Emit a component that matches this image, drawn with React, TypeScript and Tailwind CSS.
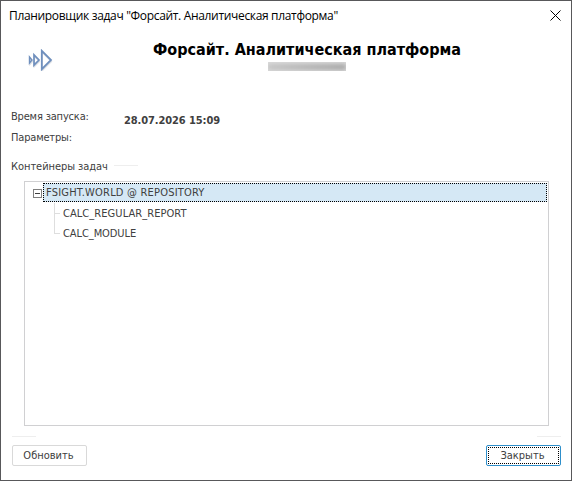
import React, { useState } from "react";

const containers = [
  {
    name: "FSIGHT.WORLD @ REPOSITORY",
    tasks: [
      { name: "CALC_REGULAR_REPORT", className: "tracking-[0.06px]" },
      { name: "CALC_MODULE", className: "tracking-[-0.08px]" },
    ],
  },
];

const Logo = () => (
  <svg width="26" height="22" viewBox="0 0 26 22" fill="none">
    <g stroke="#dcdfe4" strokeWidth="1.4" transform="translate(0.4 1.4)">
      <path d="M2.5 8v6L5 11z" />
      <path d="M7 5.8v10.4L12 11z" />
      <path d="M14.8 1.8v18.4L24 11z" />
    </g>
    <g stroke="#6f8fbd">
      <path d="M2.5 8v6L5 11z" strokeWidth="1.4" />
      <path d="M7 5.8v10.4L12 11z" strokeWidth="1.7" />
      <path d="M14.8 1.8v18.4L24 11z" strokeWidth="1.8" />
    </g>
  </svg>
);

const TitleBar = () => (
  <div className="flex h-[29px] items-center justify-between pl-2 pr-[10px]">
    <span className="whitespace-nowrap font-['Open_Sans','Noto_Sans',sans-serif] text-[12px] leading-4 tracking-[-0.33px] text-black">
      Планировщик задач "Форсайт. Аналитическая платформа"
    </span>
    <button aria-label="Закрыть окно">
      <svg width="11" height="11" viewBox="0 0 11 11" stroke="#000" fill="none">
        <path d="M0.5 0.5l10 10M10.5 0.5l-10 10" />
      </svg>
    </button>
  </div>
);

const Header = () => (
  <div className="flex h-[66px] pl-[26px] pt-[19px]">
    <Logo />
    <div className="ml-[99px] -mt-[10px] flex w-[310px] flex-col items-center">
      <h1 className="whitespace-nowrap text-[16px] font-bold leading-[22px] text-black">
        Форсайт. Аналитическая платформа
      </h1>
      <div className="mt-px flex h-[9px] w-[78px] items-center overflow-hidden bg-[#dcdcdc]">
        <div className="h-[6px] w-full bg-linear-to-r from-[#c4c4c4] via-[#b4b4b4] via-50% to-[#a6a6a6] blur-[2px]" />
      </div>
    </div>
  </div>
);

const TaskTree = () => {
  const [isOpen, setIsOpen] = useState(true);

  return (
    <div className="ml-[23px] mt-[7px] h-[245px] w-[525px] border border-[#d0d0d2] pt-px">
      {containers.map((container) => (
        <div key={container.name}>
          <div className="flex h-5 items-start pl-2">
            <button
              aria-label="Свернуть"
              onClick={() => setIsOpen(!isOpen)}
              className="mt-[6px] flex size-[9px] items-center justify-center border border-[#7f7f7f]"
            >
              <span className="h-px w-[5px] bg-[#404040]" />
            </button>
            <div className="ml-px flex h-[19px] w-[504px] items-center border border-dotted border-black bg-[#d5e8f5] pl-[2px] pt-[2px] whitespace-nowrap">
              <span className="tracking-[0.2px]">{container.name}</span>
            </div>
          </div>
          {isOpen && (
            <ul className="ml-[29px]">
              {container.tasks.map((task, index) => (
                <li key={task.name} className="flex h-5">
                  <div
                    className={`w-px bg-[#dedede] ${
                      index === container.tasks.length - 1 ? "h-[11px]" : "h-5"
                    }`}
                  />
                  <div className="mt-[10px] h-px w-[5px] bg-[#dedede]" />
                  <span
                    className={`ml-[3px] pt-px leading-5 ${task.className}`}
                  >
                    {task.name}
                  </span>
                </li>
              ))}
            </ul>
          )}
        </div>
      ))}
    </div>
  );
};

const App = () => (
  <div className="h-[481px] w-[572px] overflow-hidden border border-[#58585a] bg-white font-['DejaVu_Sans_Condensed','DejaVu_Sans',sans-serif] text-[11px] text-[#404040]">
    <TitleBar />
    <Header />
    <div className="flex h-[57px] pl-[10px] pt-[10px]">
      <div className="w-[113px] leading-[21px] tracking-[-0.18px]">
        <p>Время запуска:</p>
        <p>Параметры:</p>
      </div>
      <p className="mt-1 font-bold leading-[21px] tracking-[-0.1px]">
        28.07.2026 15:09
      </p>
    </div>
    <div className="mt-[3px] flex h-[18px] items-center pl-[10px]">
      <span className="w-[103px] whitespace-nowrap pt-[4px] leading-[14px] tracking-[-0.05px]">
        Контейнеры задач
      </span>
      <div className="h-px w-6 bg-[#eeeeee]" />
    </div>
    <TaskTree />
    <div className="mt-[10px] flex justify-between pl-[11px] pr-[10px]">
      <div className="h-px w-6 bg-[#eeeeee]" />
      <div className="h-px w-6 bg-[#eeeeee]" />
    </div>
    <div className="mt-2 flex justify-between pl-[11px] pr-[10px]">
      <button className="h-[21px] w-[75px] rounded-[2px] border border-[#d9d9d9] pr-[2px] pt-[2px]">
        Обновить
      </button>
      <button className="h-[21px] w-[75px] rounded-[2px] border border-[#2e8fcb] p-px">
        <span className="flex h-full items-center justify-center border border-dotted border-black pr-[2px] pt-[2px]">
          Закрыть
        </span>
      </button>
    </div>
  </div>
);

export default App;
